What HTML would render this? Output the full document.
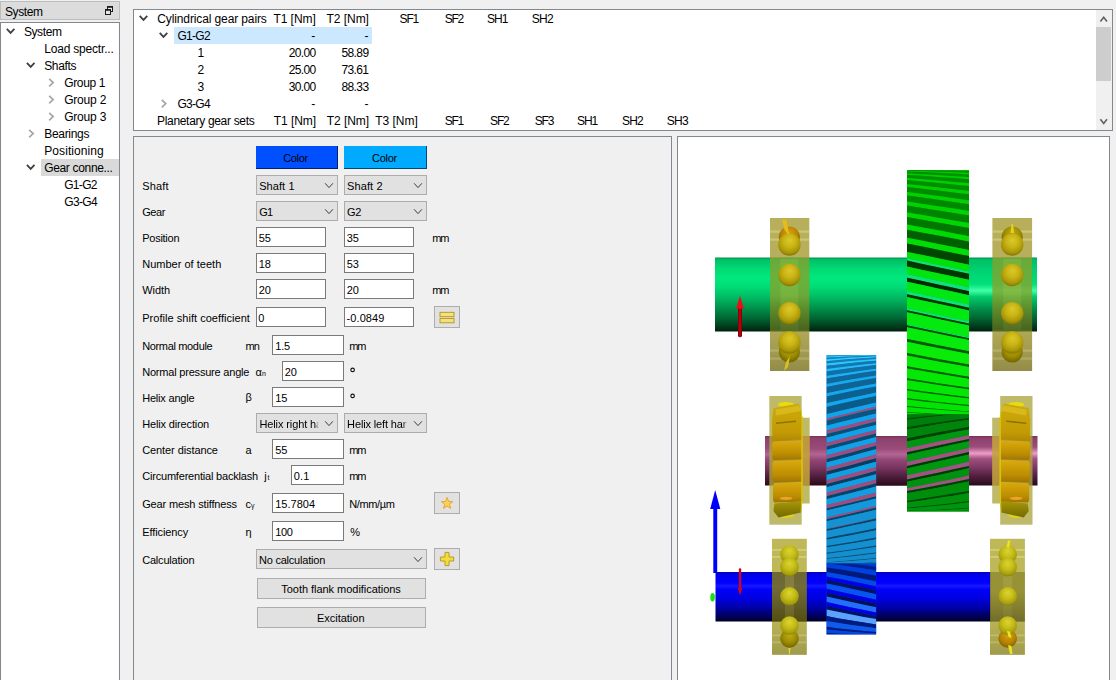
<!DOCTYPE html>
<html>
<head>
<meta charset="utf-8">
<title>Gear connections</title>
<style>
html,body{margin:0;padding:0;}
body{width:1116px;height:680px;overflow:hidden;background:#f0f0f0;font-family:"Liberation Sans",sans-serif;font-size:12px;color:#000;position:relative;}
.abs{position:absolute;}
.t{position:absolute;white-space:nowrap;line-height:14px;height:14px;font-size:12px;color:#000;}
#dockhead{left:0;top:1px;width:120px;height:19px;background:#dcdcdc;border:1px solid #bdbdbd;box-sizing:border-box;}
#tree{left:0;top:22px;width:120px;height:670px;background:#fff;border:1px solid #828790;box-sizing:border-box;}
.sel{position:absolute;}
#topbox{left:133px;top:9px;width:980px;height:122px;background:#fff;border:1px solid #828790;box-sizing:border-box;}
#form{left:133px;top:136px;width:539px;height:560px;border:1px solid #828790;background:#f0f0f0;box-sizing:border-box;}
#view{left:677px;top:136px;width:433px;height:560px;border:1px solid #828790;background:#fff;box-sizing:border-box;}
.combo{position:absolute;height:18px;background:#e1e1e1;border:1px solid #adadad;}
.inp{position:absolute;height:18px;background:#fff;border:1px solid #7a7a7a;}
.btn{position:absolute;background:#e1e1e1;border:1px solid #adadad;}
</style>
</head>
<body>
<div id="dockhead" class="abs"></div>
<svg class="abs" style="left:103px;top:4px" width="13" height="13" viewBox="103 4 13 13"><rect x="107.5" y="6.5" width="5" height="5" fill="#e6e6e6" stroke="#1c1c1c" stroke-width="1"/><path d="M107 7H113" stroke="#1c1c1c" stroke-width="1.6"/><rect x="105.5" y="9.5" width="5" height="5" fill="#e6e6e6" stroke="#1c1c1c" stroke-width="1"/><path d="M105 10H111" stroke="#1c1c1c" stroke-width="1.6"/></svg>
<div id="tree" class="abs"></div>
<div class="sel" style="left:41px;top:159px;width:78px;height:17px;background:#d9d9d9;"></div>
<div id="topbox" class="abs"></div>
<div class="sel" style="left:174px;top:27px;width:197.6px;height:17px;background:#cce8ff;"></div>
<div id="form" class="abs"></div>
<div id="view" class="abs"></div>
<svg class="abs" style="left:4.0px;top:26.0px" width="14" height="10"><path d="M2.80 2.85 L6.60 6.85 L10.40 2.85" fill="none" stroke="#404040" stroke-width="1.80"/></svg>
<svg class="abs" style="left:24.0px;top:60.0px" width="14" height="10"><path d="M2.90 2.85 L6.70 6.85 L10.50 2.85" fill="none" stroke="#404040" stroke-width="1.80"/></svg>
<svg class="abs" style="left:24.0px;top:162.0px" width="14" height="10"><path d="M2.90 2.85 L6.70 6.85 L10.50 2.85" fill="none" stroke="#404040" stroke-width="1.80"/></svg>
<svg class="abs" style="left:46.0px;top:76.0px" width="10" height="14"><path d="M3.15 2.90 L7.15 6.60 L3.15 10.30" fill="none" stroke="#a6a6a6" stroke-width="1.70"/></svg>
<svg class="abs" style="left:46.0px;top:93.0px" width="10" height="14"><path d="M3.15 2.90 L7.15 6.60 L3.15 10.30" fill="none" stroke="#a6a6a6" stroke-width="1.70"/></svg>
<svg class="abs" style="left:46.0px;top:110.0px" width="10" height="14"><path d="M3.15 2.90 L7.15 6.60 L3.15 10.30" fill="none" stroke="#a6a6a6" stroke-width="1.70"/></svg>
<svg class="abs" style="left:26.0px;top:127.0px" width="10" height="14"><path d="M3.15 2.90 L7.15 6.60 L3.15 10.30" fill="none" stroke="#a6a6a6" stroke-width="1.70"/></svg>
<svg class="abs" style="left:137.0px;top:13.0px" width="14" height="10"><path d="M2.70 2.85 L6.50 6.85 L10.30 2.85" fill="none" stroke="#404040" stroke-width="1.80"/></svg>
<svg class="abs" style="left:157.0px;top:30.0px" width="14" height="10"><path d="M2.70 2.85 L6.50 6.85 L10.30 2.85" fill="none" stroke="#404040" stroke-width="1.80"/></svg>
<svg class="abs" style="left:159.0px;top:97.0px" width="10" height="14"><path d="M2.75 2.90 L6.75 6.60 L2.75 10.30" fill="none" stroke="#a6a6a6" stroke-width="1.70"/></svg>
<div class="abs" style="left:1096px;top:10px;width:16px;height:120px;background:#f0f0f0"></div>
<div class="abs" style="left:1096px;top:27px;width:15.4px;height:53.7px;background:#cdcdcd"></div>
<svg class="abs" style="left:1098.0px;top:14.0px" width="13" height="10"><path d="M2.40 7.50 L5.70 3.20 L9.00 7.50" fill="none" stroke="#606060" stroke-width="1.60"/></svg>
<svg class="abs" style="left:1098.0px;top:116.0px" width="13" height="10"><path d="M2.40 3.20 L5.70 7.50 L9.00 3.20" fill="none" stroke="#606060" stroke-width="1.60"/></svg>
<div class="abs" style="left:256px;top:146px;width:81px;height:21.5px;background:#0050ff;border-right:1.2px solid #00236e;border-bottom:1.3px solid #00236e;"></div>
<div class="abs" style="left:344px;top:146px;width:82px;height:21.5px;background:#00aaff;border-right:1.2px solid #004a70;border-bottom:1.3px solid #004a70;"></div>
<div class="combo" style="left:256px;top:175px;width:80px;"></div>
<div class="combo" style="left:344px;top:175px;width:81px;"></div>
<svg class="abs" style="left:322.0px;top:181.0px" width="14" height="10"><path d="M3.10 2.30 L7.00 6.60 L10.90 2.30" fill="none" stroke="#3c3c3c" stroke-width="1.00"/></svg>
<svg class="abs" style="left:411.0px;top:181.0px" width="14" height="10"><path d="M3.10 2.30 L7.00 6.60 L10.90 2.30" fill="none" stroke="#3c3c3c" stroke-width="1.00"/></svg>
<div class="combo" style="left:256px;top:201px;width:80px;"></div>
<div class="combo" style="left:344px;top:201px;width:81px;"></div>
<svg class="abs" style="left:322.0px;top:207.0px" width="14" height="10"><path d="M3.10 2.30 L7.00 6.60 L10.90 2.30" fill="none" stroke="#3c3c3c" stroke-width="1.00"/></svg>
<svg class="abs" style="left:411.0px;top:207.0px" width="14" height="10"><path d="M3.10 2.30 L7.00 6.60 L10.90 2.30" fill="none" stroke="#3c3c3c" stroke-width="1.00"/></svg>
<div class="combo" style="left:256px;top:413px;width:80px;"></div>
<div class="combo" style="left:344px;top:413px;width:81px;"></div>
<svg class="abs" style="left:322.0px;top:418.0px" width="14" height="10"><path d="M3.10 3.30 L7.00 7.60 L10.90 3.30" fill="none" stroke="#3c3c3c" stroke-width="1.00"/></svg>
<svg class="abs" style="left:411.0px;top:418.0px" width="14" height="10"><path d="M3.10 3.30 L7.00 7.60 L10.90 3.30" fill="none" stroke="#3c3c3c" stroke-width="1.00"/></svg>
<div class="combo" style="left:256px;top:549px;width:169px;"></div>
<svg class="abs" style="left:411.0px;top:555.0px" width="14" height="10"><path d="M3.10 2.30 L7.00 6.60 L10.90 2.30" fill="none" stroke="#3c3c3c" stroke-width="1.00"/></svg>
<div class="inp" style="left:256px;top:227px;width:68px;"></div>
<div class="inp" style="left:344px;top:227px;width:68px;"></div>
<div class="inp" style="left:256px;top:253px;width:68px;"></div>
<div class="inp" style="left:344px;top:253px;width:68px;"></div>
<div class="inp" style="left:256px;top:279px;width:68px;"></div>
<div class="inp" style="left:344px;top:279px;width:68px;"></div>
<div class="inp" style="left:256px;top:307px;width:68px;"></div>
<div class="inp" style="left:344px;top:307px;width:68px;"></div>
<div class="inp" style="left:272px;top:335px;width:70px;"></div>
<div class="inp" style="left:282px;top:361px;width:60px;"></div>
<div class="inp" style="left:272px;top:387px;width:70px;"></div>
<div class="inp" style="left:272px;top:439px;width:70px;"></div>
<div class="inp" style="left:291px;top:465px;width:51px;"></div>
<div class="inp" style="left:272px;top:493px;width:70px;"></div>
<div class="inp" style="left:272px;top:521px;width:70px;"></div>
<div class="btn" style="left:434px;top:306px;width:24px;height:20px;"></div>
<div class="btn" style="left:434px;top:492px;width:24px;height:20px;"></div>
<div class="btn" style="left:434px;top:548px;width:24px;height:20px;"></div>
<svg class="abs" style="left:438px;top:310px" width="18" height="14"><rect x="2" y="2.3" width="14" height="4.4" fill="#f4e07c" stroke="#b4941c" stroke-width="0.9"/><rect x="2" y="8.4" width="14" height="4.4" fill="#f4e07c" stroke="#b4941c" stroke-width="0.9"/></svg>
<svg class="abs" style="left:438px;top:495px" width="18" height="17"><polygon points="9.10,2.50 10.63,6.40 14.81,6.65 11.57,9.30 12.63,13.35 9.10,11.10 5.57,13.35 6.63,9.30 3.39,6.65 7.57,6.40" fill="#f8d060" stroke="#e8a828" stroke-width="1.0" stroke-linejoin="round"/></svg>
<svg class="abs" style="left:438px;top:550px" width="18" height="18"><path d="M7 2.4H11V7H15.6V11H11V15.6H7V11H2.4V7H7Z" fill="#f4dc3c" stroke="#b89c20" stroke-width="1" stroke-linejoin="round"/></svg>
<div class="btn" style="left:257px;top:578px;width:167px;height:19px;"></div>
<div class="btn" style="left:257px;top:607px;width:167px;height:19px;"></div>
<div class="t" style="left:4.90px;top:5px;letter-spacing:-0.369px;">System</div>
<div class="t" style="left:23.90px;top:25px;letter-spacing:-0.386px;">System</div>
<div class="t" style="left:44.20px;top:42px;letter-spacing:-0.189px;">Load spectr...</div>
<div class="t" style="left:44.20px;top:59px;letter-spacing:-0.355px;">Shafts</div>
<div class="t" style="left:64.20px;top:76px;letter-spacing:-0.351px;">Group 1</div>
<div class="t" style="left:64.20px;top:93px;letter-spacing:-0.208px;">Group 2</div>
<div class="t" style="left:64.20px;top:110px;letter-spacing:-0.208px;">Group 3</div>
<div class="t" style="left:44.20px;top:127px;letter-spacing:-0.297px;">Bearings</div>
<div class="t" style="left:44.20px;top:144px;letter-spacing:0.089px;">Positioning</div>
<div class="t" style="left:44.20px;top:161px;letter-spacing:-0.332px;">Gear conne...</div>
<div class="t" style="left:64.20px;top:178px;letter-spacing:-0.683px;">G1-G2</div>
<div class="t" style="left:64.20px;top:195px;letter-spacing:-0.623px;">G3-G4</div>
<div class="t" style="left:157.30px;top:12px;letter-spacing:-0.120px;">Cylindrical gear pairs</div>
<div class="t" style="left:273.40px;top:12px;letter-spacing:-0.039px;">T1 [Nm]</div>
<div class="t" style="left:326.50px;top:12px;letter-spacing:-0.039px;">T2 [Nm]</div>
<div class="t" style="left:399.60px;top:12px;letter-spacing:-1.200px;">SF1</div>
<div class="t" style="left:444.70px;top:12px;letter-spacing:-1.200px;">SF2</div>
<div class="t" style="left:487.00px;top:12px;letter-spacing:-0.915px;">SH1</div>
<div class="t" style="left:531.80px;top:12px;letter-spacing:-0.748px;">SH2</div>
<div class="t" style="left:177.40px;top:29px;letter-spacing:-0.683px;">G1-G2</div>
<div class="t" style="left:311.30px;top:29px;">-</div>
<div class="t" style="left:364.60px;top:29px;">-</div>
<div class="t" style="left:197.40px;top:46px;">1</div>
<div class="t" style="left:288.70px;top:46px;letter-spacing:-0.606px;">20.00</div>
<div class="t" style="left:341.40px;top:46px;letter-spacing:-0.566px;">58.89</div>
<div class="t" style="left:197.40px;top:63px;">2</div>
<div class="t" style="left:288.70px;top:63px;letter-spacing:-0.606px;">25.00</div>
<div class="t" style="left:341.40px;top:63px;letter-spacing:-0.626px;">73.61</div>
<div class="t" style="left:197.40px;top:80px;">3</div>
<div class="t" style="left:288.70px;top:80px;letter-spacing:-0.606px;">30.00</div>
<div class="t" style="left:341.40px;top:80px;letter-spacing:-0.566px;">88.33</div>
<div class="t" style="left:177.40px;top:97px;letter-spacing:-0.683px;">G3-G4</div>
<div class="t" style="left:311.30px;top:97px;">-</div>
<div class="t" style="left:364.60px;top:97px;">-</div>
<div class="t" style="left:157.00px;top:114px;letter-spacing:-0.315px;">Planetary gear sets</div>
<div class="t" style="left:273.70px;top:114px;letter-spacing:-0.039px;">T1 [Nm]</div>
<div class="t" style="left:326.70px;top:114px;letter-spacing:-0.039px;">T2 [Nm]</div>
<div class="t" style="left:375.30px;top:114px;letter-spacing:-0.039px;">T3 [Nm]</div>
<div class="t" style="left:444.70px;top:114px;letter-spacing:-1.200px;">SF1</div>
<div class="t" style="left:490.10px;top:114px;letter-spacing:-1.200px;">SF2</div>
<div class="t" style="left:534.80px;top:114px;letter-spacing:-1.200px;">SF3</div>
<div class="t" style="left:576.90px;top:114px;letter-spacing:-0.981px;">SH1</div>
<div class="t" style="left:622.00px;top:114px;letter-spacing:-0.815px;">SH2</div>
<div class="t" style="left:666.70px;top:114px;letter-spacing:-0.715px;">SH3</div>
<div class="t" style="left:142.20px;top:179px;font-size:11px;letter-spacing:0.142px;">Shaft</div>
<div class="t" style="left:142.20px;top:205px;font-size:11px;letter-spacing:-0.442px;">Gear</div>
<div class="t" style="left:142.20px;top:231px;font-size:11px;letter-spacing:-0.255px;">Position</div>
<div class="t" style="left:142.20px;top:257px;font-size:11px;letter-spacing:0.015px;">Number of teeth</div>
<div class="t" style="left:142.20px;top:283px;font-size:11px;letter-spacing:-0.025px;">Width</div>
<div class="t" style="left:142.20px;top:311px;font-size:11px;letter-spacing:0.036px;">Profile shift coefficient</div>
<div class="t" style="left:142.20px;top:339px;font-size:11px;letter-spacing:-0.346px;">Normal module</div>
<div class="t" style="left:142.20px;top:365px;font-size:11px;letter-spacing:-0.199px;">Normal pressure angle</div>
<div class="t" style="left:142.20px;top:391px;font-size:11px;letter-spacing:-0.202px;">Helix angle</div>
<div class="t" style="left:142.20px;top:417px;font-size:11px;letter-spacing:-0.146px;">Helix direction</div>
<div class="t" style="left:142.20px;top:443px;font-size:11px;letter-spacing:-0.090px;">Center distance</div>
<div class="t" style="left:142.20px;top:469px;font-size:11px;letter-spacing:-0.193px;">Circumferential backlash</div>
<div class="t" style="left:142.20px;top:497px;font-size:11px;letter-spacing:-0.149px;">Gear mesh stiffness</div>
<div class="t" style="left:142.20px;top:525px;font-size:11px;letter-spacing:-0.098px;">Efficiency</div>
<div class="t" style="left:142.20px;top:553px;font-size:11px;letter-spacing:-0.202px;">Calculation</div>
<div class="t" style="left:283.20px;top:151px;font-size:11px;letter-spacing:-0.319px;">Color</div>
<div class="t" style="left:372.10px;top:151px;font-size:11px;letter-spacing:-0.319px;">Color</div>
<div class="t" style="left:259.20px;top:179px;font-size:11px;letter-spacing:0.077px;">Shaft 1</div>
<div class="t" style="left:347.00px;top:179px;font-size:11px;letter-spacing:0.120px;">Shaft 2</div>
<div class="t" style="left:259.20px;top:205px;font-size:11px;letter-spacing:-0.644px;">G1</div>
<div class="t" style="left:347.00px;top:205px;font-size:11px;letter-spacing:-0.394px;">G2</div>
<div class="t" style="left:258.70px;top:231px;font-size:11px;letter-spacing:-0.175px;">55</div>
<div class="t" style="left:346.70px;top:231px;font-size:11px;letter-spacing:-0.175px;">35</div>
<div class="t" style="left:258.70px;top:257px;font-size:11px;letter-spacing:-0.175px;">18</div>
<div class="t" style="left:346.70px;top:257px;font-size:11px;letter-spacing:-0.175px;">53</div>
<div class="t" style="left:258.70px;top:283px;font-size:11px;letter-spacing:-0.175px;">20</div>
<div class="t" style="left:346.70px;top:283px;font-size:11px;letter-spacing:-0.175px;">20</div>
<div class="t" style="left:258.30px;top:311px;font-size:11px;">0</div>
<div class="t" style="left:346.50px;top:311px;font-size:11px;letter-spacing:0.098px;">-0.0849</div>
<div class="t" style="left:432.20px;top:231px;font-size:11px;letter-spacing:-1.114px;">mm</div>
<div class="t" style="left:432.20px;top:283px;font-size:11px;letter-spacing:-1.114px;">mm</div>
<div class="t" style="left:245.40px;top:339px;font-size:11px;letter-spacing:-0.691px;">mn</div>
<div class="t" style="left:275.20px;top:339px;font-size:11px;letter-spacing:-0.132px;">1.5</div>
<div class="t" style="left:349.20px;top:339px;font-size:11px;letter-spacing:-1.114px;">mm</div>
<div class="t" style="left:255.50px;top:365px;font-size:11px;">α</div>
<div class="t" style="left:262.00px;top:370px;line-height:8px;height:8px;font-size:7px;">n</div>
<div class="t" style="left:284.70px;top:365px;font-size:11px;letter-spacing:-0.175px;">20</div>
<div class="t" style="left:245.40px;top:390px;font-size:11px;">β</div>
<div class="t" style="left:275.20px;top:391px;font-size:11px;letter-spacing:-0.175px;">15</div>
<div class="t" style="left:245.40px;top:443px;font-size:11px;">a</div>
<div class="t" style="left:275.20px;top:443px;font-size:11px;letter-spacing:-0.175px;">55</div>
<div class="t" style="left:349.20px;top:443px;font-size:11px;letter-spacing:-1.114px;">mm</div>
<div class="t" style="left:264.30px;top:469px;font-size:11px;">j</div>
<div class="t" style="left:267.50px;top:474px;line-height:8px;height:8px;font-size:7px;">t</div>
<div class="t" style="left:293.70px;top:469px;font-size:11px;letter-spacing:0.201px;">0.1</div>
<div class="t" style="left:349.20px;top:469px;font-size:11px;letter-spacing:-1.114px;">mm</div>
<div class="t" style="left:245.40px;top:497px;font-size:11px;">c</div>
<div class="t" style="left:251.00px;top:502px;line-height:8px;height:8px;font-size:7px;">γ</div>
<div class="t" style="left:275.20px;top:497px;font-size:11px;letter-spacing:0.019px;">15.7804</div>
<div class="t" style="left:349.20px;top:497px;font-size:11px;letter-spacing:-0.356px;">N/mm/µm</div>
<div class="t" style="left:245.40px;top:525px;font-size:11px;">η</div>
<div class="t" style="left:275.20px;top:525px;font-size:11px;letter-spacing:-0.320px;">100</div>
<div class="t" style="left:350.30px;top:525px;font-size:11px;">%</div>
<div class="t" style="left:258.90px;top:553px;font-size:11px;letter-spacing:-0.207px;">No calculation</div>
<div class="t" style="left:281.30px;top:582px;font-size:11px;letter-spacing:-0.038px;">Tooth flank modifications</div>
<div class="t" style="left:317.00px;top:611px;font-size:11px;letter-spacing:-0.020px;">Excitation</div>
<div class="t" style="left:259.40px;top:417px;width:60.0px;overflow:hidden;font-size:11px;letter-spacing:-0.106px;-webkit-mask-image:linear-gradient(to right,#000 56px,transparent 60.0px);mask-image:linear-gradient(to right,#000 56px,transparent 60.0px);">Helix right hand</div>
<div class="t" style="left:347.10px;top:417px;width:60.5px;overflow:hidden;font-size:11px;letter-spacing:-0.137px;-webkit-mask-image:linear-gradient(to right,#000 56px,transparent 60.5px);mask-image:linear-gradient(to right,#000 56px,transparent 60.5px);">Helix left hand</div>
<svg class="abs" style="left:349px;top:366px" width="8" height="8"><circle cx="3.6" cy="3.9" r="1.75" fill="none" stroke="#111" stroke-width="1.15"/></svg>
<svg class="abs" style="left:349px;top:392px" width="8" height="8"><circle cx="3.6" cy="3.9" r="1.75" fill="none" stroke="#111" stroke-width="1.15"/></svg>
<svg class="abs" style="left:678px;top:137px" width="431" height="543" viewBox="678 137 431 543" shape-rendering="auto">
<defs>
<linearGradient id="gGreenL" x1="0" y1="0" x2="0" y2="1">
<stop offset="0" stop-color="#009450"/><stop offset="0.03" stop-color="#00c066"/><stop offset="0.14" stop-color="#00d874"/><stop offset="0.28" stop-color="#00e87e"/><stop offset="0.4" stop-color="#00dc76"/><stop offset="0.55" stop-color="#00b860"/><stop offset="0.7" stop-color="#008c48"/><stop offset="0.85" stop-color="#005c2e"/><stop offset="0.95" stop-color="#003418"/><stop offset="1" stop-color="#00200e"/></linearGradient>
<linearGradient id="gGreenR" x1="0" y1="0" x2="0" y2="1">
<stop offset="0" stop-color="#009450"/><stop offset="0.03" stop-color="#00c066"/><stop offset="0.2" stop-color="#00d472"/><stop offset="0.36" stop-color="#00e07a"/><stop offset="0.45" stop-color="#40ffa8"/><stop offset="0.53" stop-color="#00cc6c"/><stop offset="0.7" stop-color="#008c48"/><stop offset="0.85" stop-color="#005c2e"/><stop offset="0.95" stop-color="#003418"/><stop offset="1" stop-color="#00200e"/></linearGradient>
<linearGradient id="gPurple" x1="0" y1="0" x2="0" y2="1">
<stop offset="0" stop-color="#783256"/><stop offset="0.05" stop-color="#8c426c"/><stop offset="0.25" stop-color="#9a4a78"/><stop offset="0.37" stop-color="#b26694"/><stop offset="0.48" stop-color="#944676"/><stop offset="0.65" stop-color="#76345e"/><stop offset="0.82" stop-color="#4e1e3c"/><stop offset="1" stop-color="#280a1a"/></linearGradient>
<linearGradient id="gPurpleR" x1="0" y1="0" x2="0" y2="1">
<stop offset="0" stop-color="#783256"/><stop offset="0.05" stop-color="#8c426c"/><stop offset="0.22" stop-color="#9c4c7a"/><stop offset="0.35" stop-color="#ee9cc8"/><stop offset="0.46" stop-color="#a0507e"/><stop offset="0.65" stop-color="#7a3662"/><stop offset="0.82" stop-color="#4e1e3c"/><stop offset="1" stop-color="#280a1a"/></linearGradient>
<linearGradient id="gBlue" x1="0" y1="0" x2="0" y2="1">
<stop offset="0" stop-color="#0000c4"/><stop offset="0.07" stop-color="#0000ee"/><stop offset="0.22" stop-color="#0000ff"/><stop offset="0.28" stop-color="#1818ff"/><stop offset="0.36" stop-color="#0000f8"/><stop offset="0.55" stop-color="#0000dc"/><stop offset="0.72" stop-color="#0000a8"/><stop offset="0.9" stop-color="#000058"/><stop offset="1" stop-color="#000024"/></linearGradient>
<radialGradient id="gBall" cx="0.5" cy="0.4" r="0.62" fx="0.52" fy="0.3">
<stop offset="0" stop-color="#dcc828"/><stop offset="0.45" stop-color="#c8b414"/><stop offset="0.8" stop-color="#a89608"/><stop offset="1" stop-color="#807000"/></radialGradient>
<radialGradient id="gBallO" cx="0.5" cy="0.4" r="0.62" fx="0.52" fy="0.3">
<stop offset="0" stop-color="#d8a010"/><stop offset="0.6" stop-color="#b88404"/><stop offset="1" stop-color="#806000"/></radialGradient>
<radialGradient id="gBallD" cx="0.5" cy="0.4" r="0.62" fx="0.52" fy="0.3">
<stop offset="0" stop-color="#c0ac10"/><stop offset="0.6" stop-color="#9c8c04"/><stop offset="1" stop-color="#706000"/></radialGradient>
<radialGradient id="gBallB" cx="0.5" cy="0.4" r="0.62" fx="0.5" fy="0.3">
<stop offset="0" stop-color="#dcd430"/><stop offset="0.5" stop-color="#c4bc18"/><stop offset="0.85" stop-color="#a49c0c"/><stop offset="1" stop-color="#807800"/></radialGradient>
<linearGradient id="gRoll" x1="0" y1="0" x2="0" y2="1">
<stop offset="0" stop-color="#d8ac10"/><stop offset="0.25" stop-color="#d0a008"/><stop offset="0.7" stop-color="#bc8c02"/><stop offset="1" stop-color="#a07400"/></linearGradient>
<linearGradient id="gRoll1" x1="0" y1="0" x2="0" y2="1">
<stop offset="0" stop-color="#c8ac0c"/><stop offset="0.35" stop-color="#c8a408"/><stop offset="0.75" stop-color="#c49a04"/><stop offset="1" stop-color="#b08802"/></linearGradient>
<linearGradient id="gRoll5" x1="0" y1="0" x2="0" y2="1">
<stop offset="0" stop-color="#a89808"/><stop offset="0.5" stop-color="#8c8004"/><stop offset="1" stop-color="#746804"/></linearGradient>
<linearGradient id="gRedArrow" x1="0" y1="0" x2="1" y2="0">
<stop offset="0" stop-color="#7a0008"/><stop offset="0.5" stop-color="#c80010"/><stop offset="1" stop-color="#700008"/></linearGradient>
<linearGradient id="gShade" x1="0" y1="0" x2="0" y2="1">
<stop offset="0" stop-color="#000" stop-opacity="0"/><stop offset="0.5" stop-color="#000" stop-opacity="0"/><stop offset="0.73" stop-color="#000" stop-opacity="0.30"/><stop offset="0.745" stop-color="#000" stop-opacity="0.04"/><stop offset="1" stop-color="#000" stop-opacity="0.20"/></linearGradient>
<linearGradient id="gShadeB" x1="0" y1="0" x2="0" y2="1">
<stop offset="0" stop-color="#000" stop-opacity="0"/><stop offset="0.45" stop-color="#000" stop-opacity="0"/><stop offset="0.71" stop-color="#000" stop-opacity="0.25"/><stop offset="0.72" stop-color="#000" stop-opacity="0.03"/><stop offset="1" stop-color="#000" stop-opacity="0.16"/></linearGradient>
<clipPath id="cG4"><rect x="907" y="170" width="62" height="245"/></clipPath>
<clipPath id="cG3"><rect x="907" y="414.5" width="62" height="96.7"/></clipPath>
<clipPath id="cG2"><rect x="826.5" y="355" width="49.7" height="209"/></clipPath>
<clipPath id="cG1"><rect x="826.5" y="563.5" width="49.7" height="71"/></clipPath>
</defs>
<rect x="715" y="257.5" width="192.5" height="74" fill="url(#gGreenL)"/>
<rect x="968.5" y="257.5" width="68.5" height="74" fill="url(#gGreenR)"/>
<rect x="765" y="436" width="142.5" height="49.5" fill="url(#gPurple)"/>
<rect x="876" y="436" width="32" height="49.5" fill="url(#gPurple)"/>
<rect x="968.5" y="436" width="69" height="49.5" fill="url(#gPurpleR)"/>
<rect x="715.5" y="572" width="275" height="49.5" fill="url(#gBlue)"/>
<rect x="907" y="170" width="62" height="341.5" fill="#00b400"/>
<g clip-path="url(#cG4)"><polygon fill="#009200" points="907.0,170.0 922.5,170.0 938.0,170.0 953.5,170.0 969.0,170.0 969.0,170.6 953.5,170.3 938.0,170.1 922.5,170.0 907.0,170.0"/><polygon fill="#00cc00" points="907.0,170.0 922.5,170.0 938.0,170.1 953.5,170.3 969.0,170.6 969.0,171.3 953.5,170.8 938.0,170.5 922.5,170.2 907.0,170.1"/><polygon fill="#009200" points="907.0,170.1 922.5,170.2 938.0,170.5 953.5,170.8 969.0,171.3 969.0,173.0 953.5,172.3 938.0,171.7 922.5,171.2 907.0,170.8"/><polygon fill="#00cd00" points="907.0,170.8 922.5,171.2 938.0,171.7 953.5,172.3 969.0,173.0 969.0,174.4 953.5,173.5 938.0,172.8 922.5,172.1 907.0,171.5"/><polygon fill="#009100" points="907.0,171.5 922.5,172.1 938.0,172.8 953.5,173.5 969.0,174.4 969.0,177.3 953.5,176.2 938.0,175.2 922.5,174.3 907.0,173.4"/><polygon fill="#00cd00" points="907.0,173.4 922.5,174.3 938.0,175.2 953.5,176.2 969.0,177.3 969.0,179.3 953.5,178.0 938.0,176.9 922.5,175.8 907.0,174.8"/><polygon fill="#008f00" points="907.0,174.8 922.5,175.8 938.0,176.9 953.5,178.0 969.0,179.3 969.0,183.3 953.5,181.9 938.0,180.5 922.5,179.2 907.0,177.9"/><polygon fill="#00cf00" points="907.0,177.9 922.5,179.2 938.0,180.5 953.5,181.9 969.0,183.3 969.0,186.0 953.5,184.4 938.0,182.9 922.5,181.4 907.0,180.0"/><polygon fill="#008d00" points="907.0,180.0 922.5,181.4 938.0,182.9 953.5,184.4 969.0,186.0 969.0,191.1 953.5,189.2 938.0,187.5 922.5,185.8 907.0,184.2"/><polygon fill="#00d000" points="907.0,184.2 922.5,185.8 938.0,187.5 953.5,189.2 969.0,191.1 969.0,194.3 953.5,192.4 938.0,190.5 922.5,188.7 907.0,186.9"/><polygon fill="#008a00" points="907.0,186.9 922.5,188.7 938.0,190.5 953.5,192.4 969.0,194.3 969.0,200.4 953.5,198.2 938.0,196.1 922.5,194.1 907.0,192.1"/><polygon fill="#00d200" points="907.0,192.1 922.5,194.1 938.0,196.1 953.5,198.2 969.0,200.4 969.0,204.3 953.5,202.0 938.0,199.8 922.5,197.6 907.0,195.5"/><polygon fill="#008700" points="907.0,195.5 922.5,197.6 938.0,199.8 953.5,202.0 969.0,204.3 969.0,211.1 953.5,208.6 938.0,206.2 922.5,203.9 907.0,201.6"/><polygon fill="#00d400" points="907.0,201.6 922.5,203.9 938.0,206.2 953.5,208.6 969.0,211.1 969.0,215.5 953.5,212.9 938.0,210.4 922.5,208.0 907.0,205.6"/><polygon fill="#008300" points="907.0,205.6 922.5,208.0 938.0,210.4 953.5,212.9 969.0,215.5 969.0,223.1 953.5,220.4 938.0,217.7 922.5,215.1 907.0,212.5"/><polygon fill="#00d600" points="907.0,212.5 922.5,215.1 938.0,217.7 953.5,220.4 969.0,223.1 969.0,228.1 953.5,225.3 938.0,222.5 922.5,219.7 907.0,217.1"/><polygon fill="#007800" points="907.0,217.1 922.5,219.7 938.0,222.5 953.5,225.3 969.0,228.1 969.0,236.2 953.5,233.2 938.0,230.3 922.5,227.4 907.0,224.6"/><polygon fill="#00d902" points="907.0,224.6 922.5,227.4 938.0,230.3 953.5,233.2 969.0,236.2 969.0,241.7 953.5,238.6 938.0,235.6 922.5,232.7 907.0,229.8"/><polygon fill="#005f00" points="907.0,229.8 922.5,232.7 938.0,235.6 953.5,238.6 969.0,241.7 969.0,250.1 953.5,247.0 938.0,243.9 922.5,240.8 907.0,237.8"/><polygon fill="#00dd06" points="907.0,237.8 922.5,240.8 938.0,243.9 953.5,247.0 969.0,250.1 969.0,256.1 953.5,252.9 938.0,249.7 922.5,246.6 907.0,243.5"/><polygon fill="#004500" points="907.0,243.5 922.5,246.6 938.0,249.7 953.5,252.9 969.0,256.1 969.0,264.8 953.5,261.5 938.0,258.3 922.5,255.0 907.0,251.9"/><polygon fill="#00e10b" points="907.0,251.9 922.5,255.0 938.0,258.3 953.5,261.5 969.0,264.8 969.0,271.4 953.5,268.1 938.0,264.8 922.5,261.5 907.0,258.3"/><polygon fill="#10e07c" points="907.0,258.3 922.5,261.5 938.0,264.8 953.5,268.1 969.0,271.4 969.0,273.8 953.5,270.5 938.0,267.2 922.5,263.9 907.0,260.6"/><polygon fill="#003700" points="907.0,260.6 922.5,263.9 938.0,267.2 953.5,270.5 969.0,273.8 969.0,279.8 953.5,276.5 938.0,273.2 922.5,269.9 907.0,266.6"/><polygon fill="#00e410" points="907.0,266.6 922.5,269.9 938.0,273.2 953.5,276.5 969.0,279.8 969.0,287.5 953.5,284.1 938.0,280.8 922.5,277.4 907.0,274.1"/><polygon fill="#10e07c" points="907.0,274.1 922.5,277.4 938.0,280.8 953.5,284.1 969.0,287.5 969.0,291.2 953.5,287.8 938.0,284.4 922.5,281.1 907.0,277.7"/><polygon fill="#002900" points="907.0,277.7 922.5,281.1 938.0,284.4 953.5,287.8 969.0,291.2 969.0,295.2 953.5,291.8 938.0,288.4 922.5,285.0 907.0,281.7"/><polygon fill="#00e814" points="907.0,281.7 922.5,285.0 938.0,288.4 953.5,291.8 969.0,295.2 969.0,304.5 953.5,301.1 938.0,297.8 922.5,294.4 907.0,291.0"/><polygon fill="#10e07c" points="907.0,291.0 922.5,294.4 938.0,297.8 953.5,301.1 969.0,304.5 969.0,307.7 953.5,304.3 938.0,301.0 922.5,297.6 907.0,294.2"/><polygon fill="#003300" points="907.0,294.2 922.5,297.6 938.0,301.0 953.5,304.3 969.0,307.7 969.0,310.4 953.5,307.1 938.0,303.7 922.5,300.4 907.0,297.0"/><polygon fill="#02e911" points="907.0,297.0 922.5,300.4 938.0,303.7 953.5,307.1 969.0,310.4 969.0,321.3 953.5,318.0 938.0,314.7 922.5,311.4 907.0,308.0"/><polygon fill="#10e07c" points="907.0,308.0 922.5,311.4 938.0,314.7 953.5,318.0 969.0,321.3 969.0,323.6 953.5,320.3 938.0,317.0 922.5,313.6 907.0,310.3"/><polygon fill="#004000" points="907.0,310.3 922.5,313.6 938.0,317.0 953.5,320.3 969.0,323.6 969.0,325.5 953.5,322.2 938.0,318.9 922.5,315.6 907.0,312.3"/><polygon fill="#04ea0e" points="907.0,312.3 922.5,315.6 938.0,318.9 953.5,322.2 969.0,325.5 969.0,337.1 953.5,333.9 938.0,330.7 922.5,327.4 907.0,324.2"/><polygon fill="#10e07c" points="907.0,324.2 922.5,327.4 938.0,330.7 953.5,333.9 969.0,337.1 969.0,338.2 953.5,335.0 938.0,331.8 922.5,328.6 907.0,325.3"/><polygon fill="#004d00" points="907.0,325.3 922.5,328.6 938.0,331.8 953.5,335.0 969.0,338.2 969.0,340.1 953.5,336.9 938.0,333.7 922.5,330.5 907.0,327.3"/><polygon fill="#06eb0b" points="907.0,327.3 922.5,330.5 938.0,333.7 953.5,336.9 969.0,340.1 969.0,351.3 953.5,348.2 938.0,345.2 922.5,342.1 907.0,338.9"/><polygon fill="#005900" points="907.0,338.9 922.5,342.1 938.0,345.2 953.5,348.2 969.0,351.3 969.0,354.0 953.5,351.0 938.0,348.0 922.5,344.9 907.0,341.8"/><polygon fill="#08ec08" points="907.0,341.8 922.5,344.9 938.0,348.0 953.5,351.0 969.0,354.0 969.0,364.6 953.5,361.8 938.0,358.9 922.5,356.0 907.0,353.0"/><polygon fill="#005f00" points="907.0,353.0 922.5,356.0 938.0,358.9 953.5,361.8 969.0,364.6 969.0,367.0 953.5,364.2 938.0,361.4 922.5,358.5 907.0,355.6"/><polygon fill="#07ea07" points="907.0,355.6 922.5,358.5 938.0,361.4 953.5,364.2 969.0,367.0 969.0,376.8 953.5,374.2 938.0,371.6 922.5,368.9 907.0,366.2"/><polygon fill="#006200" points="907.0,366.2 922.5,368.9 938.0,371.6 953.5,374.2 969.0,376.8 969.0,378.9 953.5,376.3 938.0,373.8 922.5,371.1 907.0,368.5"/><polygon fill="#05e805" points="907.0,368.5 922.5,371.1 938.0,373.8 953.5,376.3 969.0,378.9 969.0,387.8 953.5,385.5 938.0,383.2 922.5,380.8 907.0,378.3"/><polygon fill="#006500" points="907.0,378.3 922.5,380.8 938.0,383.2 953.5,385.5 969.0,387.8 969.0,389.5 953.5,387.3 938.0,385.0 922.5,382.6 907.0,380.2"/><polygon fill="#04e704" points="907.0,380.2 922.5,382.6 938.0,385.0 953.5,387.3 969.0,389.5 969.0,397.3 953.5,395.3 938.0,393.3 922.5,391.2 907.0,389.1"/><polygon fill="#006800" points="907.0,389.1 922.5,391.2 938.0,393.3 953.5,395.3 969.0,397.3 969.0,398.6 953.5,396.8 938.0,394.8 922.5,392.8 907.0,390.6"/><polygon fill="#03e503" points="907.0,390.6 922.5,392.8 938.0,394.8 953.5,396.8 969.0,398.6 969.0,405.1 953.5,403.5 938.0,401.9 922.5,400.1 907.0,398.3"/><polygon fill="#006b00" points="907.0,398.3 922.5,400.1 938.0,401.9 953.5,403.5 969.0,405.1 969.0,406.2 953.5,404.7 938.0,403.1 922.5,401.4 907.0,399.6"/><polygon fill="#02e402" points="907.0,399.6 922.5,401.4 938.0,403.1 953.5,404.7 969.0,406.2 969.0,411.4 953.5,410.2 938.0,408.9 922.5,407.5 907.0,406.0"/><polygon fill="#006d00" points="907.0,406.0 922.5,407.5 938.0,408.9 953.5,410.2 969.0,411.4 969.0,412.1 953.5,411.0 938.0,409.8 922.5,408.4 907.0,407.0"/><polygon fill="#01e301" points="907.0,407.0 922.5,408.4 938.0,409.8 953.5,411.0 969.0,412.1 969.0,415.8 953.5,414.9 938.0,414.0 922.5,413.1 907.0,412.0"/><polygon fill="#006e00" points="907.0,412.0 922.5,413.1 938.0,414.0 953.5,414.9 969.0,415.8 969.0,416.3 953.5,415.5 938.0,414.7 922.5,413.7 907.0,412.7"/><polygon fill="#00e200" points="907.0,412.7 922.5,413.7 938.0,414.7 953.5,415.5 969.0,416.3 969.0,418.3 953.5,417.9 938.0,417.4 922.5,416.9 907.0,416.2"/><polygon fill="#006f00" points="907.0,416.2 922.5,416.9 938.0,417.4 953.5,417.9 969.0,418.3 969.0,418.5 953.5,418.2 938.0,417.8 922.5,417.2 907.0,416.6"/><polygon fill="#00e200" points="907.0,416.6 922.5,417.2 938.0,417.8 953.5,418.2 969.0,418.5 969.0,419.0 953.5,419.0 938.0,418.9 922.5,418.8 907.0,418.5"/><polygon fill="#007000" points="907.0,418.5 922.5,418.8 938.0,418.9 953.5,419.0 969.0,419.0 969.0,419.0 953.5,419.0 938.0,419.0 922.5,418.9 907.0,418.7"/><polygon fill="#00e200" points="907.0,418.7 922.5,418.9 938.0,419.0 953.5,419.0 969.0,419.0 969.0,419.0 953.5,419.0 938.0,419.0 922.5,419.0 907.0,419.0"/></g>
<rect x="907" y="414" width="62" height="97.5" fill="#009410"/>
<g clip-path="url(#cG3)"><polygon fill="#005406" points="907.0,410.0 922.5,410.0 938.0,410.0 953.5,410.0 969.0,410.0 969.0,410.0 953.5,410.0 938.0,410.0 922.5,410.0 907.0,410.2"/><polygon fill="#00780a" points="907.0,410.2 922.5,410.0 938.0,410.0 953.5,410.0 969.0,410.0 969.0,410.0 953.5,410.3 938.0,410.7 922.5,411.5 907.0,412.4"/><polygon fill="#005406" points="907.0,412.4 922.5,411.5 938.0,410.7 953.5,410.3 969.0,410.0 969.0,410.2 953.5,410.6 938.0,411.3 922.5,412.2 907.0,413.3"/><polygon fill="#007a0a" points="907.0,413.3 922.5,412.2 938.0,411.3 953.5,410.6 969.0,410.2 969.0,412.3 953.5,413.5 938.0,414.9 922.5,416.5 907.0,418.3"/><polygon fill="#005106" points="907.0,418.3 922.5,416.5 938.0,414.9 953.5,413.5 969.0,412.3 969.0,413.3 953.5,414.6 938.0,416.2 922.5,418.0 907.0,419.9"/><polygon fill="#007e0b" points="907.0,419.9 922.5,418.0 938.0,416.2 953.5,414.6 969.0,413.3 969.0,418.0 953.5,420.0 938.0,422.2 922.5,424.6 907.0,427.1"/><polygon fill="#004b06" points="907.0,427.1 922.5,424.6 938.0,422.2 953.5,420.0 969.0,418.0 969.0,419.8 953.5,422.0 938.0,424.3 922.5,426.9 907.0,429.6"/><polygon fill="#00840c" points="907.0,429.6 922.5,426.9 938.0,424.3 953.5,422.0 969.0,419.8 969.0,426.8 953.5,429.4 938.0,432.3 922.5,435.2 907.0,438.3"/><polygon fill="#004106" points="907.0,438.3 922.5,435.2 938.0,432.3 953.5,429.4 969.0,426.8 969.0,429.4 953.5,432.2 938.0,435.2 922.5,438.3 907.0,441.5"/><polygon fill="#009612" points="907.0,441.5 922.5,438.3 938.0,435.2 953.5,432.2 969.0,429.4 969.0,435.3 953.5,438.4 938.0,441.6 922.5,444.9 907.0,448.3"/><polygon fill="#a25284" points="907.0,448.3 922.5,444.9 938.0,441.6 953.5,438.4 969.0,435.3 969.0,439.0 953.5,442.2 938.0,445.5 922.5,448.9 907.0,452.3"/><polygon fill="#003b06" points="907.0,452.3 922.5,448.9 938.0,445.5 953.5,442.2 969.0,439.0 969.0,441.3 953.5,444.6 938.0,447.9 922.5,451.3 907.0,454.8"/><polygon fill="#009a13" points="907.0,454.8 922.5,451.3 938.0,447.9 953.5,444.6 969.0,441.3 969.0,448.1 953.5,451.5 938.0,455.0 922.5,458.5 907.0,462.0"/><polygon fill="#a25284" points="907.0,462.0 922.5,458.5 938.0,455.0 953.5,451.5 969.0,448.1 969.0,452.1 953.5,455.6 938.0,459.1 922.5,462.6 907.0,466.1"/><polygon fill="#003906" points="907.0,466.1 922.5,462.6 938.0,459.1 953.5,455.6 969.0,452.1 969.0,454.6 953.5,458.1 938.0,461.6 922.5,465.1 907.0,468.5"/><polygon fill="#009710" points="907.0,468.5 922.5,465.1 938.0,461.6 953.5,458.1 969.0,454.6 969.0,461.8 953.5,465.2 938.0,468.7 922.5,472.1 907.0,475.5"/><polygon fill="#a25284" points="907.0,475.5 922.5,472.1 938.0,468.7 953.5,465.2 969.0,461.8 969.0,465.9 953.5,469.3 938.0,472.8 922.5,476.1 907.0,479.4"/><polygon fill="#003b06" points="907.0,479.4 922.5,476.1 938.0,472.8 953.5,469.3 969.0,465.9 969.0,468.3 953.5,471.8 938.0,475.2 922.5,478.5 907.0,481.7"/><polygon fill="#00910e" points="907.0,481.7 922.5,478.5 938.0,475.2 953.5,471.8 969.0,468.3 969.0,475.6 953.5,478.9 938.0,482.1 922.5,485.2 907.0,488.2"/><polygon fill="#a25284" points="907.0,488.2 922.5,485.2 938.0,482.1 953.5,478.9 969.0,475.6 969.0,479.0 953.5,482.2 938.0,485.3 922.5,488.3 907.0,491.1"/><polygon fill="#003f06" points="907.0,491.1 922.5,488.3 938.0,485.3 953.5,482.2 969.0,479.0 969.0,481.5 953.5,484.6 938.0,487.7 922.5,490.5 907.0,493.3"/><polygon fill="#008d0c" points="907.0,493.3 922.5,490.5 938.0,487.7 953.5,484.6 969.0,481.5 969.0,490.9 953.5,493.6 938.0,496.1 922.5,498.5 907.0,500.7"/><polygon fill="#004607" points="907.0,500.7 922.5,498.5 938.0,496.1 953.5,493.6 969.0,490.9 969.0,493.1 953.5,495.7 938.0,498.1 922.5,500.4 907.0,502.4"/><polygon fill="#00920d" points="907.0,502.4 922.5,500.4 938.0,498.1 953.5,495.7 969.0,493.1 969.0,501.0 953.5,502.9 938.0,504.7 922.5,506.3 907.0,507.7"/><polygon fill="#004d07" points="907.0,507.7 922.5,506.3 938.0,504.7 953.5,502.9 969.0,501.0 969.0,502.3 953.5,504.2 938.0,505.8 922.5,507.3 907.0,508.5"/><polygon fill="#00950e" points="907.0,508.5 922.5,507.3 938.0,505.8 953.5,504.2 969.0,502.3 969.0,507.7 953.5,508.8 938.0,509.7 922.5,510.4 907.0,510.8"/><polygon fill="#005208" points="907.0,510.8 922.5,510.4 938.0,509.7 953.5,508.8 969.0,507.7 969.0,508.4 953.5,509.4 938.0,510.2 922.5,510.7 907.0,510.9"/><polygon fill="#00960e" points="907.0,510.9 922.5,510.7 938.0,510.2 953.5,509.4 969.0,508.4 969.0,510.8 953.5,511.0 938.0,511.0 922.5,511.0 907.0,511.0"/><polygon fill="#005408" points="907.0,511.0 922.5,511.0 938.0,511.0 953.5,511.0 969.0,510.8 969.0,510.9 953.5,511.0 938.0,511.0 922.5,511.0 907.0,511.0"/><polygon fill="#00960e" points="907.0,511.0 922.5,511.0 938.0,511.0 953.5,511.0 969.0,510.9 969.0,511.0 953.5,511.0 938.0,511.0 922.5,511.0 907.0,511.0"/></g>
<rect x="826.5" y="355" width="49.7" height="209" fill="#1488c8"/>
<g clip-path="url(#cG2)"><polygon fill="#1482be" points="826.5,355.0 838.9,355.0 851.4,355.0 863.8,355.0 876.2,355.0 876.2,355.0 863.8,355.0 851.4,355.0 838.9,355.0 826.5,355.1"/><polygon fill="#3cd2ff" points="826.5,355.1 838.9,355.0 851.4,355.0 863.8,355.0 876.2,355.0 876.2,355.0 863.8,355.0 851.4,355.1 838.9,355.4 826.5,355.7"/><polygon fill="#1482be" points="826.5,355.7 838.9,355.4 851.4,355.1 863.8,355.0 876.2,355.0 876.2,355.1 863.8,355.3 851.4,355.6 838.9,356.0 826.5,356.5"/><polygon fill="#3ad0fe" points="826.5,356.5 838.9,356.0 851.4,355.6 863.8,355.3 876.2,355.1 876.2,355.6 863.8,356.0 851.4,356.5 838.9,357.1 826.5,357.8"/><polygon fill="#1480bc" points="826.5,357.8 838.9,357.1 851.4,356.5 863.8,356.0 876.2,355.6 876.2,356.3 863.8,356.9 851.4,357.6 838.9,358.4 826.5,359.3"/><polygon fill="#35cbfd" points="826.5,359.3 838.9,358.4 851.4,357.6 863.8,356.9 876.2,356.3 876.2,357.5 863.8,358.3 851.4,359.1 838.9,360.1 826.5,361.2"/><polygon fill="#137db7" points="826.5,361.2 838.9,360.1 851.4,359.1 863.8,358.3 876.2,357.5 876.2,359.1 863.8,360.0 851.4,361.1 838.9,362.3 826.5,363.5"/><polygon fill="#2fc5fc" points="826.5,363.5 838.9,362.3 851.4,361.1 863.8,360.0 876.2,359.1 876.2,360.7 863.8,361.8 851.4,363.1 838.9,364.4 826.5,365.8"/><polygon fill="#1278b0" points="826.5,365.8 838.9,364.4 851.4,363.1 863.8,361.8 876.2,360.7 876.2,363.2 863.8,364.5 851.4,366.0 838.9,367.5 826.5,369.1"/><polygon fill="#26bcf9" points="826.5,369.1 838.9,367.5 851.4,366.0 863.8,364.5 876.2,363.2 876.2,365.0 863.8,366.5 851.4,368.1 838.9,369.7 826.5,371.5"/><polygon fill="#1071a6" points="826.5,371.5 838.9,369.7 851.4,368.1 863.8,366.5 876.2,365.0 876.2,368.7 863.8,370.4 851.4,372.2 838.9,374.1 826.5,376.0"/><polygon fill="#1eb0f4" points="826.5,376.0 838.9,374.1 851.4,372.2 863.8,370.4 876.2,368.7 876.2,370.7 863.8,372.5 851.4,374.4 838.9,376.4 826.5,378.5"/><polygon fill="#0e689b" points="826.5,378.5 838.9,376.4 851.4,374.4 863.8,372.5 876.2,370.7 876.2,375.5 863.8,377.5 851.4,379.6 838.9,381.8 826.5,384.1"/><polygon fill="#17a8f0" points="826.5,384.1 838.9,381.8 851.4,379.6 863.8,377.5 876.2,375.5 876.2,378.0 863.8,380.1 851.4,382.3 838.9,384.6 826.5,387.0"/><polygon fill="#0d6495" points="826.5,387.0 838.9,384.6 851.4,382.3 863.8,380.1 876.2,378.0 876.2,383.5 863.8,385.8 851.4,388.2 838.9,390.7 826.5,393.2"/><polygon fill="#15a7ef" points="826.5,393.2 838.9,390.7 851.4,388.2 863.8,385.8 876.2,383.5 876.2,386.4 863.8,388.8 851.4,391.3 838.9,393.8 826.5,396.5"/><polygon fill="#0c608f" points="826.5,396.5 838.9,393.8 851.4,391.3 863.8,388.8 876.2,386.4 876.2,392.6 863.8,395.2 851.4,397.8 838.9,400.5 826.5,403.3"/><polygon fill="#13a6ee" points="826.5,403.3 838.9,400.5 851.4,397.8 863.8,395.2 876.2,392.6 876.2,395.9 863.8,398.5 851.4,401.3 838.9,404.1 826.5,406.9"/><polygon fill="#0b5b88" points="826.5,406.9 838.9,404.1 851.4,401.3 863.8,398.5 876.2,395.9 876.2,402.6 863.8,405.4 851.4,408.3 838.9,411.2 826.5,414.2"/><polygon fill="#11a4ec" points="826.5,414.2 838.9,411.2 851.4,408.3 863.8,405.4 876.2,402.6 876.2,406.6 863.8,409.5 851.4,412.5 838.9,415.5 826.5,418.5"/><polygon fill="#9e4e7e" points="826.5,418.5 838.9,415.5 851.4,412.5 863.8,409.5 876.2,406.6 876.2,408.7 863.8,411.6 851.4,414.6 838.9,417.6 826.5,420.7"/><polygon fill="#0a5681" points="826.5,420.7 838.9,417.6 851.4,414.6 863.8,411.6 876.2,408.7 876.2,413.4 863.8,416.4 851.4,419.5 838.9,422.6 826.5,425.7"/><polygon fill="#10a3eb" points="826.5,425.7 838.9,422.6 851.4,419.5 863.8,416.4 876.2,413.4 876.2,417.9 863.8,421.0 851.4,424.2 838.9,427.3 826.5,430.5"/><polygon fill="#9e4e7e" points="826.5,430.5 838.9,427.3 851.4,424.2 863.8,421.0 876.2,417.9 876.2,421.4 863.8,424.5 851.4,427.7 838.9,430.9 826.5,434.1"/><polygon fill="#095079" points="826.5,434.1 838.9,430.9 851.4,427.7 863.8,424.5 876.2,421.4 876.2,424.9 863.8,428.1 851.4,431.3 838.9,434.5 826.5,437.8"/><polygon fill="#10a2e9" points="826.5,437.8 838.9,434.5 851.4,431.3 863.8,428.1 876.2,424.9 876.2,429.8 863.8,433.0 851.4,436.2 838.9,439.5 826.5,442.8"/><polygon fill="#9e4e7e" points="826.5,442.8 838.9,439.5 851.4,436.2 863.8,433.0 876.2,429.8 876.2,433.4 863.8,436.6 851.4,439.9 838.9,443.2 826.5,446.5"/><polygon fill="#084a70" points="826.5,446.5 838.9,443.2 851.4,439.9 863.8,436.6 876.2,433.4 876.2,436.9 863.8,440.2 851.4,443.5 838.9,446.8 826.5,450.1"/><polygon fill="#11a1e8" points="826.5,450.1 838.9,446.8 851.4,443.5 863.8,440.2 876.2,436.9 876.2,441.9 863.8,445.2 851.4,448.6 838.9,451.9 826.5,455.2"/><polygon fill="#9e4e7e" points="826.5,455.2 838.9,451.9 851.4,448.6 863.8,445.2 876.2,441.9 876.2,445.8 863.8,449.1 851.4,452.4 838.9,455.8 826.5,459.1"/><polygon fill="#074468" points="826.5,459.1 838.9,455.8 851.4,452.4 863.8,449.1 876.2,445.8 876.2,449.2 863.8,452.6 851.4,455.9 838.9,459.3 826.5,462.6"/><polygon fill="#11a0e6" points="826.5,462.6 838.9,459.3 851.4,455.9 863.8,452.6 876.2,449.2 876.2,454.3 863.8,457.7 851.4,461.0 838.9,464.4 826.5,467.7"/><polygon fill="#9e4e7e" points="826.5,467.7 838.9,464.4 851.4,461.0 863.8,457.7 876.2,454.3 876.2,458.2 863.8,461.6 851.4,464.9 838.9,468.3 826.5,471.6"/><polygon fill="#063e60" points="826.5,471.6 838.9,468.3 851.4,464.9 863.8,461.6 876.2,458.2 876.2,461.7 863.8,465.1 851.4,468.4 838.9,471.7 826.5,475.1"/><polygon fill="#119fe4" points="826.5,475.1 838.9,471.7 851.4,468.4 863.8,465.1 876.2,461.7 876.2,467.0 863.8,470.3 851.4,473.6 838.9,477.0 826.5,480.3"/><polygon fill="#9e4e7e" points="826.5,480.3 838.9,477.0 851.4,473.6 863.8,470.3 876.2,467.0 876.2,470.8 863.8,474.2 851.4,477.5 838.9,480.8 826.5,484.0"/><polygon fill="#073f61" points="826.5,484.0 838.9,480.8 851.4,477.5 863.8,474.2 876.2,470.8 876.2,474.2 863.8,477.5 851.4,480.8 838.9,484.1 826.5,487.3"/><polygon fill="#129de2" points="826.5,487.3 838.9,484.1 851.4,480.8 863.8,477.5 876.2,474.2 876.2,479.4 863.8,482.7 851.4,485.9 838.9,489.2 826.5,492.4"/><polygon fill="#9e4e7e" points="826.5,492.4 838.9,489.2 851.4,485.9 863.8,482.7 876.2,479.4 876.2,483.3 863.8,486.6 851.4,489.8 838.9,493.0 826.5,496.2"/><polygon fill="#074163" points="826.5,496.2 838.9,493.0 851.4,489.8 863.8,486.6 876.2,483.3 876.2,486.5 863.8,489.7 851.4,492.9 838.9,496.1 826.5,499.2"/><polygon fill="#129ce1" points="826.5,499.2 838.9,496.1 851.4,492.9 863.8,489.7 876.2,486.5 876.2,492.5 863.8,495.6 851.4,498.8 838.9,501.9 826.5,505.0"/><polygon fill="#9e4e7e" points="826.5,505.0 838.9,501.9 851.4,498.8 863.8,495.6 876.2,492.5 876.2,496.3 863.8,499.4 851.4,502.5 838.9,505.5 826.5,508.5"/><polygon fill="#084264" points="826.5,508.5 838.9,505.5 851.4,502.5 863.8,499.4 876.2,496.3 876.2,498.4 863.8,501.5 851.4,504.5 838.9,507.6 826.5,510.5"/><polygon fill="#1398db" points="826.5,510.5 838.9,507.6 851.4,504.5 863.8,501.5 876.2,498.4 876.2,505.7 863.8,508.7 851.4,511.7 838.9,514.6 826.5,517.4"/><polygon fill="#9e4e7e" points="826.5,517.4 838.9,514.6 851.4,511.7 863.8,508.7 876.2,505.7 876.2,507.6 863.8,510.6 851.4,513.5 838.9,516.4 826.5,519.2"/><polygon fill="#084365" points="826.5,519.2 838.9,516.4 851.4,513.5 863.8,510.6 876.2,507.6 876.2,509.8 863.8,512.7 851.4,515.6 838.9,518.4 826.5,521.2"/><polygon fill="#1493d4" points="826.5,521.2 838.9,518.4 851.4,515.6 863.8,512.7 876.2,509.8 876.2,517.9 863.8,520.7 851.4,523.4 838.9,526.1 826.5,528.7"/><polygon fill="#9e4e7e" points="826.5,528.7 838.9,526.1 851.4,523.4 863.8,520.7 876.2,517.9 876.2,518.6 863.8,521.3 851.4,524.0 838.9,526.7 826.5,529.3"/><polygon fill="#094567" points="826.5,529.3 838.9,526.7 851.4,524.0 863.8,521.3 876.2,518.6 876.2,520.4 863.8,523.2 851.4,525.8 838.9,528.4 826.5,531.0"/><polygon fill="#1491d1" points="826.5,531.0 838.9,528.4 851.4,525.8 863.8,523.2 876.2,520.4 876.2,528.2 863.8,530.7 851.4,533.2 838.9,535.6 826.5,537.9"/><polygon fill="#094669" points="826.5,537.9 838.9,535.6 851.4,533.2 863.8,530.7 876.2,528.2 876.2,530.3 863.8,532.8 851.4,535.2 838.9,537.5 826.5,539.7"/><polygon fill="#1490d0" points="826.5,539.7 838.9,537.5 851.4,535.2 863.8,532.8 876.2,530.3 876.2,537.5 863.8,539.7 851.4,541.9 838.9,544.0 826.5,546.0"/><polygon fill="#09486b" points="826.5,546.0 838.9,544.0 851.4,541.9 863.8,539.7 876.2,537.5 876.2,539.2 863.8,541.4 851.4,543.5 838.9,545.5 826.5,547.4"/><polygon fill="#148fcf" points="826.5,547.4 838.9,545.5 851.4,543.5 863.8,541.4 876.2,539.2 876.2,545.6 863.8,547.5 851.4,549.4 838.9,551.2 826.5,552.8"/><polygon fill="#09496c" points="826.5,552.8 838.9,551.2 851.4,549.4 863.8,547.5 876.2,545.6 876.2,546.9 863.8,548.8 851.4,550.6 838.9,552.3 826.5,553.9"/><polygon fill="#148ece" points="826.5,553.9 838.9,552.3 851.4,550.6 863.8,548.8 876.2,546.9 876.2,552.4 863.8,554.0 851.4,555.5 838.9,557.0 826.5,558.3"/><polygon fill="#0a4a6e" points="826.5,558.3 838.9,557.0 851.4,555.5 863.8,554.0 876.2,552.4 876.2,553.5 863.8,555.0 851.4,556.4 838.9,557.8 826.5,559.0"/><polygon fill="#148dcd" points="826.5,559.0 838.9,557.8 851.4,556.4 863.8,555.0 876.2,553.5 876.2,558.0 863.8,559.2 851.4,560.3 838.9,561.4 826.5,562.3"/><polygon fill="#0a4b6f" points="826.5,562.3 838.9,561.4 851.4,560.3 863.8,559.2 876.2,558.0 876.2,558.7 863.8,559.9 851.4,561.0 838.9,561.9 826.5,562.8"/><polygon fill="#148ccc" points="826.5,562.8 838.9,561.9 851.4,561.0 863.8,559.9 876.2,558.7 876.2,562.1 863.8,562.9 851.4,563.7 838.9,564.3 826.5,564.9"/><polygon fill="#0a4b6f" points="826.5,564.9 838.9,564.3 851.4,563.7 863.8,562.9 876.2,562.1 876.2,562.6 863.8,563.4 851.4,564.1 838.9,564.7 826.5,565.1"/><polygon fill="#148ccc" points="826.5,565.1 838.9,564.7 851.4,564.1 863.8,563.4 876.2,562.6 876.2,564.8 863.8,565.2 851.4,565.6 838.9,565.8 826.5,566.0"/><polygon fill="#0a4c70" points="826.5,566.0 838.9,565.8 851.4,565.6 863.8,565.2 876.2,564.8 876.2,565.0 863.8,565.4 851.4,565.7 838.9,565.9 826.5,566.0"/><polygon fill="#148ccc" points="826.5,566.0 838.9,565.9 851.4,565.7 863.8,565.4 876.2,565.0 876.2,565.9 863.8,566.0 851.4,566.0 838.9,566.0 826.5,566.0"/><polygon fill="#0a4c70" points="826.5,566.0 838.9,566.0 851.4,566.0 863.8,566.0 876.2,565.9 876.2,566.0 863.8,566.0 851.4,566.0 838.9,566.0 826.5,566.0"/></g>
<rect x="826.5" y="563.5" width="49.7" height="71" fill="#0038d8"/>
<g clip-path="url(#cG1)"><polygon fill="#002496" points="826.5,558.5 838.9,558.5 851.4,558.5 863.8,558.5 876.2,558.5 876.2,558.8 863.8,558.5 851.4,558.5 838.9,558.5 826.5,558.5"/><polygon fill="#0038c9" points="826.5,558.5 838.9,558.5 851.4,558.5 863.8,558.5 876.2,558.8 876.2,560.7 863.8,559.9 851.4,559.3 838.9,558.8 826.5,558.6"/><polygon fill="#002495" points="826.5,558.6 838.9,558.8 851.4,559.3 863.8,559.9 876.2,560.7 876.2,562.5 863.8,561.4 851.4,560.4 838.9,559.7 826.5,559.1"/><polygon fill="#003bd0" points="826.5,559.1 838.9,559.7 851.4,560.4 863.8,561.4 876.2,562.5 876.2,566.9 863.8,565.2 851.4,563.8 838.9,562.4 826.5,561.3"/><polygon fill="#00208c" points="826.5,561.3 838.9,562.4 851.4,563.8 863.8,565.2 876.2,566.9 876.2,570.4 863.8,568.5 851.4,566.7 838.9,565.1 826.5,563.6"/><polygon fill="#0041dd" points="826.5,563.6 838.9,565.1 851.4,566.7 863.8,568.5 876.2,570.4 876.2,575.7 863.8,573.4 851.4,571.3 838.9,569.3 826.5,567.5"/><polygon fill="#001a7a" points="826.5,567.5 838.9,569.3 851.4,571.3 863.8,573.4 876.2,575.7 876.2,581.4 863.8,578.9 851.4,576.5 838.9,574.2 826.5,572.1"/><polygon fill="#034aea" points="826.5,572.1 838.9,574.2 851.4,576.5 863.8,578.9 876.2,581.4 876.2,586.4 863.8,583.8 851.4,581.2 838.9,578.7 826.5,576.4"/><polygon fill="#0000e4" points="826.5,576.4 838.9,578.7 851.4,581.2 863.8,583.8 876.2,586.4 876.2,590.3 863.8,587.6 851.4,584.9 838.9,582.4 826.5,579.8"/><polygon fill="#001263" points="826.5,579.8 838.9,582.4 851.4,584.9 863.8,587.6 876.2,590.3 876.2,594.2 863.8,591.5 851.4,588.8 838.9,586.1 826.5,583.5"/><polygon fill="#0953f0" points="826.5,583.5 838.9,586.1 851.4,588.8 863.8,591.5 876.2,594.2 876.2,599.7 863.8,596.9 851.4,594.2 838.9,591.4 826.5,588.7"/><polygon fill="#0000e4" points="826.5,588.7 838.9,591.4 851.4,594.2 863.8,596.9 876.2,599.7 876.2,603.6 863.8,600.9 851.4,598.2 838.9,595.4 826.5,592.7"/><polygon fill="#00105a" points="826.5,592.7 838.9,595.4 851.4,598.2 863.8,600.9 876.2,603.6 876.2,607.3 863.8,604.7 851.4,602.0 838.9,599.2 826.5,596.5"/><polygon fill="#2270f8" points="826.5,596.5 838.9,599.2 851.4,602.0 863.8,604.7 876.2,607.3 876.2,612.6 863.8,610.0 851.4,607.4 838.9,604.8 826.5,602.1"/><polygon fill="#0000e4" points="826.5,602.1 838.9,604.8 851.4,607.4 863.8,610.0 876.2,612.6 876.2,616.1 863.8,613.7 851.4,611.2 838.9,608.6 826.5,606.0"/><polygon fill="#00125e" points="826.5,606.0 838.9,608.6 851.4,611.2 863.8,613.7 876.2,616.1 876.2,619.1 863.8,616.9 851.4,614.5 838.9,612.0 826.5,609.5"/><polygon fill="#59a3fe" points="826.5,609.5 838.9,612.0 851.4,614.5 863.8,616.9 876.2,619.1 876.2,624.6 863.8,622.6 851.4,620.6 838.9,618.4 826.5,616.1"/><polygon fill="#001b7b" points="826.5,616.1 838.9,618.4 851.4,620.6 863.8,622.6 876.2,624.6 876.2,628.2 863.8,626.6 851.4,624.9 838.9,623.0 826.5,620.9"/><polygon fill="#0f5ceb" points="826.5,620.9 838.9,623.0 851.4,624.9 863.8,626.6 876.2,628.2 876.2,632.1 863.8,631.1 851.4,629.8 838.9,628.4 826.5,626.8"/><polygon fill="#001b7d" points="826.5,626.8 838.9,628.4 851.4,629.8 863.8,631.1 876.2,632.1 876.2,633.5 863.8,632.7 851.4,631.8 838.9,630.7 826.5,629.4"/><polygon fill="#0249de" points="826.5,629.4 838.9,630.7 851.4,631.8 863.8,632.7 876.2,633.5 876.2,634.5 863.8,634.4 851.4,634.1 838.9,633.7 826.5,633.0"/><polygon fill="#001879" points="826.5,633.0 838.9,633.7 851.4,634.1 863.8,634.4 876.2,634.5 876.2,634.5 863.8,634.5 851.4,634.5 838.9,634.3 826.5,633.9"/><polygon fill="#0046dc" points="826.5,633.9 838.9,634.3 851.4,634.5 863.8,634.5 876.2,634.5 876.2,634.5 863.8,634.5 851.4,634.5 838.9,634.5 826.5,634.5"/></g>
<rect x="770.0" y="218" width="39.3" height="153" fill="rgba(160,150,40,0.76)"/>
<rect x="770.0" y="230.5" width="39.3" height="2.2" fill="rgba(230,224,150,0.45)"/>
<rect x="770.0" y="238.5" width="39.3" height="2.2" fill="rgba(230,224,150,0.45)"/>
<rect x="770.0" y="349.5" width="39.3" height="2.2" fill="rgba(230,224,150,0.45)"/>
<rect x="770.0" y="357.5" width="39.3" height="2.2" fill="rgba(230,224,150,0.45)"/>
<rect x="770.0" y="257.5" width="39.3" height="74" fill="rgba(40,210,70,0.20)"/>
<rect x="780.4" y="259" width="18.0" height="71" fill="rgba(170,210,80,0.22)"/>
<rect x="770.0" y="218" width="39.3" height="153" fill="url(#gShade)"/>
<circle cx="789.4" cy="237.0" r="10.6" fill="url(#gBallO)"/>
<circle cx="789.4" cy="352.0" r="10.6" fill="url(#gBallD)"/>
<circle cx="789.4" cy="244.5" r="11.2" fill="url(#gBall)"/>
<circle cx="789.4" cy="275.0" r="11.2" fill="url(#gBall)"/>
<circle cx="789.4" cy="313.2" r="11.2" fill="url(#gBall)"/>
<circle cx="789.4" cy="342.5" r="11.2" fill="url(#gBall)"/>
<rect x="992.4" y="218" width="39.7" height="153" fill="rgba(160,150,40,0.76)"/>
<rect x="992.4" y="230.5" width="39.7" height="2.2" fill="rgba(230,224,150,0.45)"/>
<rect x="992.4" y="238.5" width="39.7" height="2.2" fill="rgba(230,224,150,0.45)"/>
<rect x="992.4" y="349.5" width="39.7" height="2.2" fill="rgba(230,224,150,0.45)"/>
<rect x="992.4" y="357.5" width="39.7" height="2.2" fill="rgba(230,224,150,0.45)"/>
<rect x="992.4" y="257.5" width="39.7" height="74" fill="rgba(40,210,70,0.20)"/>
<rect x="1003.2" y="259" width="18.0" height="71" fill="rgba(170,210,80,0.22)"/>
<rect x="992.4" y="218" width="39.7" height="153" fill="url(#gShade)"/>
<circle cx="1012.2" cy="237.0" r="10.6" fill="url(#gBallD)"/>
<circle cx="1012.2" cy="352.0" r="10.6" fill="url(#gBallD)"/>
<circle cx="1012.2" cy="244.5" r="11.2" fill="url(#gBall)"/>
<circle cx="1012.2" cy="275.0" r="11.2" fill="url(#gBall)"/>
<circle cx="1012.2" cy="313.2" r="11.2" fill="url(#gBall)"/>
<circle cx="1012.2" cy="342.5" r="11.2" fill="url(#gBall)"/>
<polygon points="782,219.5 786.5,219.5 789.5,236 784.5,230" fill="#e6bc18"/>
<polygon points="784,371 786,362 790,356 788,367" fill="#d8c020"/>
<polygon points="1011.5,224 1013,224 1014,233 1010.5,233" fill="#e8d020"/>
<rect x="769.3" y="396" width="32.4" height="128.7" fill="rgba(172,166,64,0.78)"/>
<rect x="801.7" y="417.7" width="8" height="85.8" fill="rgba(172,166,64,0.78)"/>
<rect x="801.7" y="436" width="8" height="49.5" fill="rgba(220,160,60,0.45)"/>
<rect x="1000.2" y="396" width="32.3" height="128.7" fill="rgba(172,166,64,0.78)"/>
<rect x="992.2" y="417.7" width="8" height="85.8" fill="rgba(172,166,64,0.78)"/>
<rect x="992.2" y="436" width="8" height="49.5" fill="rgba(220,160,60,0.45)"/>
<ellipse cx="786.0" cy="404.6" rx="8" ry="2.6" fill="#e8dc10"/><ellipse cx="786.0" cy="515.2" rx="8" ry="2.8" fill="#e0d018"/><polygon points="773.5,408.0 799.0,403.4 802.6,418.0 802.4,439.0 772.4,441.5 772.0,420.0" fill="url(#gRoll1)"/><polygon points="775.5,409.5 799.0,405.5 800.6,411.0 776.0,415.5" fill="#d8b81c"/><polygon points="776.0,422.4 796.0,420.4 796.0,422.0 776.0,424.0" fill="#8c7406"/><polygon points="773.4,441.5 802.0,440.3 802.6,443.5 802.6,458.0 802.0,459.2 773.4,460.0 772.2,457.5 772.2,444.0" fill="url(#gRoll)"/><polygon points="773.6,461.0 802.0,459.8 802.6,463.0 802.6,480.0 802.0,481.2 773.6,482.0 772.4,479.5 772.4,463.5" fill="url(#gRoll)"/><polygon points="774.2,483.0 801.8,481.8 802.4,485.0 802.4,500.5 801.8,501.7 774.2,502.5 773.0,500.0 773.0,485.5" fill="url(#gRoll)"/><polygon points="774.5,503.5 802.0,501.0 801.0,512.5 778.5,517.6 773.4,511.0" fill="url(#gRoll5)"/><ellipse cx="786.0" cy="498.3" rx="6.5" ry="1.6" fill="#e8a428"/><polygon points="800.5,406.0 802.8,420.0 802.8,500.0 800.5,514.0 801.2,500.0 801.4,420.0" fill="#d8c808"/>
<ellipse cx="1016.2" cy="404.6" rx="8" ry="2.6" fill="#e8dc10"/><ellipse cx="1016.2" cy="515.2" rx="8" ry="2.8" fill="#e0d018"/><polygon points="1028.7,408.0 1003.2,403.4 999.6,418.0 999.8,439.0 1029.8,441.5 1030.2,420.0" fill="url(#gRoll1)"/><polygon points="1026.7,409.5 1003.2,405.5 1001.6,411.0 1026.2,415.5" fill="#d8b81c"/><polygon points="1026.2,422.4 1006.2,420.4 1006.2,422.0 1026.2,424.0" fill="#8c7406"/><polygon points="1028.8,441.5 1000.2,440.3 999.6,443.5 999.6,458.0 1000.2,459.2 1028.8,460.0 1030.0,457.5 1030.0,444.0" fill="url(#gRoll)"/><polygon points="1028.6,461.0 1000.2,459.8 999.6,463.0 999.6,480.0 1000.2,481.2 1028.6,482.0 1029.8,479.5 1029.8,463.5" fill="url(#gRoll)"/><polygon points="1028.0,483.0 1000.4,481.8 999.8,485.0 999.8,500.5 1000.4,501.7 1028.0,502.5 1029.2,500.0 1029.2,485.5" fill="url(#gRoll)"/><polygon points="1027.7,503.5 1000.2,501.0 1001.2,512.5 1023.7,517.6 1028.8,511.0" fill="url(#gRoll5)"/><ellipse cx="1016.2" cy="498.3" rx="6.5" ry="1.6" fill="#e8a428"/><polygon points="1001.7,406.0 999.4,420.0 999.4,500.0 1001.7,514.0 1001.0,500.0 1000.8,420.0" fill="#d8c808"/>
<rect x="772.0" y="538.8" width="34.8" height="116" fill="rgba(165,157,25,0.72)"/>
<rect x="772.0" y="549.0" width="34.8" height="1.8" fill="rgba(236,230,150,0.45)"/>
<rect x="772.0" y="556.0" width="34.8" height="1.8" fill="rgba(236,230,150,0.45)"/>
<rect x="772.0" y="634.5" width="34.8" height="1.8" fill="rgba(236,230,150,0.45)"/>
<rect x="772.0" y="641.5" width="34.8" height="1.8" fill="rgba(236,230,150,0.45)"/>
<rect x="772.0" y="572" width="34.8" height="49.5" fill="rgba(100,94,10,0.42)"/>
<rect x="785.0" y="574" width="9" height="45" fill="rgba(190,180,90,0.28)"/>
<rect x="772.0" y="538.8" width="34.8" height="116" fill="url(#gShadeB)"/>
<circle cx="789.5" cy="554.5" r="9.3" fill="url(#gBallB)"/>
<circle cx="789.5" cy="638.5" r="9.3" fill="url(#gBallD)"/>
<circle cx="789.5" cy="567.0" r="9.3" fill="url(#gBallB)"/>
<circle cx="789.5" cy="596.3" r="9.3" fill="url(#gBallB)"/>
<circle cx="789.5" cy="625.5" r="9.3" fill="url(#gBallB)"/>
<rect x="990.0" y="538.8" width="34.9" height="116" fill="rgba(165,157,25,0.72)"/>
<rect x="990.0" y="549.0" width="34.9" height="1.8" fill="rgba(236,230,150,0.45)"/>
<rect x="990.0" y="556.0" width="34.9" height="1.8" fill="rgba(236,230,150,0.45)"/>
<rect x="990.0" y="634.5" width="34.9" height="1.8" fill="rgba(236,230,150,0.45)"/>
<rect x="990.0" y="641.5" width="34.9" height="1.8" fill="rgba(236,230,150,0.45)"/>
<rect x="990.0" y="572" width="34.9" height="49.5" fill="rgba(100,94,10,0.42)"/>
<rect x="1003.2" y="574" width="9" height="45" fill="rgba(190,180,90,0.28)"/>
<rect x="990.0" y="538.8" width="34.9" height="116" fill="url(#gShadeB)"/>
<circle cx="1007.7" cy="554.5" r="9.3" fill="url(#gBallB)"/>
<circle cx="1007.7" cy="638.5" r="9.3" fill="url(#gBallO)"/>
<circle cx="1007.7" cy="567.0" r="9.3" fill="url(#gBallB)"/>
<circle cx="1007.7" cy="596.3" r="9.3" fill="url(#gBallB)"/>
<circle cx="1007.7" cy="625.5" r="9.3" fill="url(#gBallB)"/>
<polygon points="1008,540.5 1010.5,540.5 1009,548 1006.5,547" fill="#f0e020"/>
<polygon points="1010,654 1008,645 1011.5,646 1012.5,654" fill="#f0e020"/>
<polygon points="1007,631 1010,631.5 1011.5,638 1008.5,637" fill="#f0e020"/>
<polygon points="788.5,648 790.5,648 789.8,654 789,654" fill="#e8d820"/>
<rect x="738" y="306" width="4" height="31.2" rx="1.6" fill="url(#gRedArrow)"/>
<polygon points="740,295.8 743.8,308.5 736.2,308.5" fill="#ee0c1a"/>
<rect x="713.3" y="507" width="3.9" height="66" fill="#0000ff"/>
<polygon points="715.2,490 720.3,509 710.2,509" fill="#0000ff"/>
<rect x="738.9" y="568.3" width="2.3" height="22" rx="1" fill="#e00010"/>
<polygon points="737.8,588 742.2,588 740,595.5" fill="#e00010"/>
<ellipse cx="712.6" cy="597.3" rx="2.3" ry="4.2" fill="#18e018"/>
</svg>
</body>
</html>
